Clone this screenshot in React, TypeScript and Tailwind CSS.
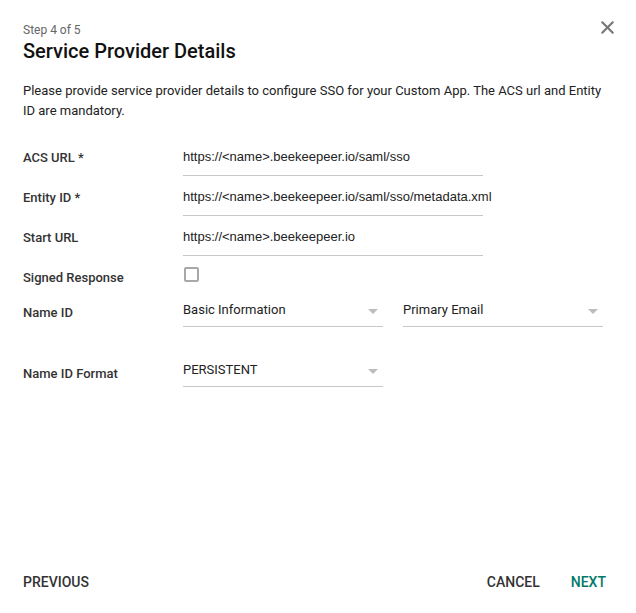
import { X } from "lucide-react";

const font = { fontFamily: "Roboto, 'Liberation Sans', sans-serif" };

const TextRow = ({ label, value }: { label: string; value: string }) => (
  <div className="flex h-10 items-start">
    <div className="w-[160px] pt-[12px] text-[13px] leading-[18px] font-medium text-[#333]">{label}</div>
    <div className="w-[300px] h-[39px] border-b border-[#c8c8c8] pt-[11px] text-[13px] leading-[18px] text-[#222] font-['Liberation_Sans',Arial,sans-serif]">
      {value}
    </div>
  </div>
);

const Select = ({ value }: { value: string }) => (
  <div className="flex w-[200px] h-[30px] items-center justify-between border-b border-[#c8c8c8] text-[13px] text-[#222]">
    <span className="leading-[18px] -mt-[3px]">{value}</span>
    <svg width="10" height="5" viewBox="0 0 10 5" className="mr-[5px] -mt-[1px]">
      <path d="M0 0 L10 0 L5 5 Z" fill="#bdbdbd" />
    </svg>
  </div>
);

export default function App() {
  return (
    <div className="flex h-[613px] flex-col bg-white px-[23px]" style={font}>
      {/* Header */}
      <div className="flex justify-between pt-[22px]">
        <div>
          <div className="text-[12px] leading-[16px] text-[#666]">Step 4 of 5</div>
          <h1 className="text-[20px] leading-[26px] font-medium text-[#111]">Service Provider Details</h1>
        </div>
        <X className="-mt-[5px] -mr-[5px] h-[21px] w-[21px] text-[#777]" strokeWidth={2.4} />
      </div>

      <p className="mt-[17px] text-[13px] leading-[20px] text-[#222]">
        Please provide service provider details to configure SSO for your Custom App. The ACS url and Entity ID are
        mandatory.
      </p>

      {/* Form */}
      <div className="mt-[16px] flex flex-col">
        <TextRow label="ACS URL *" value="https://<name>.beekeepeer.io/saml/sso" />
        <TextRow label="Entity ID *" value="https://<name>.beekeepeer.io/saml/sso/metadata.xml" />
        <TextRow label="Start URL" value="https://<name>.beekeepeer.io" />

        <div className="flex h-10 items-start">
          <div className="w-[160px] pt-[12px] text-[13px] leading-[18px] font-medium text-[#333]">Signed Response</div>
          <div className="mt-[10px] ml-[1px] h-[15px] w-[15px] rounded-[2px] border-2 border-[#a8a8a8]" />
        </div>

        <div className="flex h-[30px] items-start">
          <div className="w-[160px] pt-[7px] text-[13px] leading-[18px] font-medium text-[#333]">Name ID</div>
          <div className="flex gap-[20px]">
            <Select value="Basic Information" />
            <Select value="Primary Email" />
          </div>
        </div>

        <div className="mt-[30px] flex h-[30px] items-start">
          <div className="w-[160px] pt-[8px] text-[13px] leading-[18px] font-medium text-[#333]">Name ID Format</div>
          <Select value="PERSISTENT" />
        </div>
      </div>

      {/* Footer */}
      <div className="mt-auto mb-[13px] flex h-[36px] items-center justify-between pr-[7px] text-[14px] font-medium">
        <button className="text-[#333]">PREVIOUS</button>
        <div className="flex gap-[31px]">
          <button className="text-[#333]">CANCEL</button>
          <button className="text-[#00796b]">NEXT</button>
        </div>
      </div>
    </div>
  );
}
